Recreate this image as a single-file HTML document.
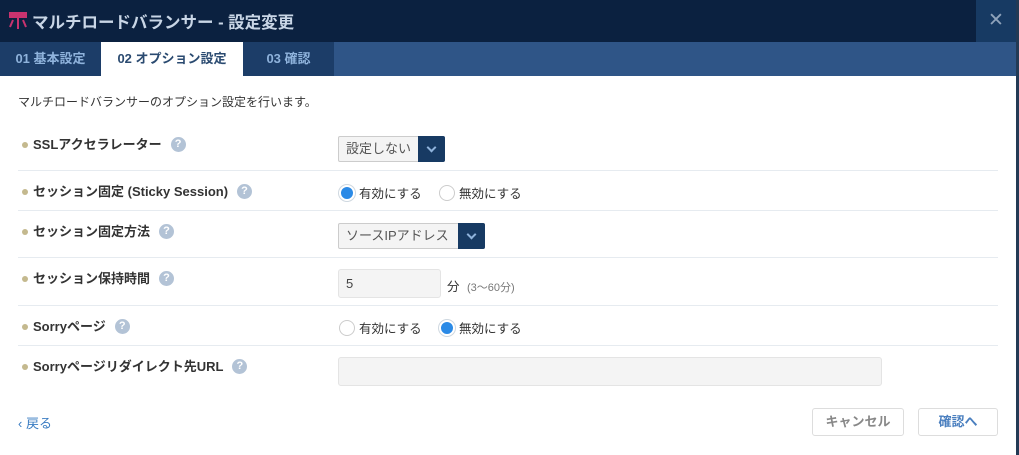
<!DOCTYPE html><html><head><meta charset="utf-8"><style>
*{box-sizing:border-box;margin:0;padding:0}
body{width:1019px;height:455px;overflow:hidden;background:#fff;font-family:"Liberation Sans","Noto Sans CJK JP",sans-serif;position:relative;color:#333}
.hd{position:absolute;left:0;top:0;width:1019px;height:42px;background:#0b2140}
.hd .t{position:absolute;left:32px;top:9px;font-size:16.5px;font-weight:bold;color:#c9d6e6}
.cl{position:absolute;left:976px;top:0;width:40px;height:42px;background:#173a63;color:#8fa3bb;font-size:19px;text-align:center;line-height:42px}
.tabs{position:absolute;left:0;top:42px;width:1016px;height:34px;background:#2f5587}
.tab{position:absolute;top:0;height:34px;line-height:34px;font-size:13px;font-weight:bold;color:#8fb3dc;text-align:center;background:#1c3d68}
.edge{position:absolute;left:1016px;top:0;width:3px;height:455px;background:#233a55}
.desc{position:absolute;left:18px;top:93px;font-size:12px;color:#333}
.lb{position:absolute;left:22px;font-size:13px;font-weight:bold;color:#333;line-height:18px;white-space:nowrap}
.lb:before{content:"";display:inline-block;width:6px;height:6px;border-radius:50%;background:#c4b98e;margin-right:5px;vertical-align:top;margin-top:6px}
.q{display:inline-block;width:15px;height:15px;border-radius:50%;background:#b3c3d6;color:#fff;font-size:11px;text-align:center;line-height:15px;margin-left:9px;vertical-align:top;margin-top:1px}
.sep{position:absolute;left:18px;width:980px;height:1px;background:#e6ebf0}
.sel{position:absolute;left:338px;height:26px;border:1px solid #ccc;border-radius:2px;background:#f4f4f4;font-size:13px;color:#555;line-height:24px;padding-left:7px}
.sel .a{position:absolute;right:-1px;top:-1px;width:27px;height:26px;background:#173a63;border-radius:0 2px 2px 0}
.sel .a:after{content:"";position:absolute;left:10px;top:8px;width:5px;height:5px;border-right:2px solid #8fb3dc;border-bottom:2px solid #8fb3dc;transform:rotate(45deg)}
.rad{position:absolute;font-size:12.5px;color:#333}
.rad i{display:inline-block;width:16px;height:16px;border-radius:50%;border:1px solid #ccc;vertical-align:-3px;margin-right:4px;background:#fff}
.rad i.on{background:#2b8ae6;border:2px solid #fff;box-shadow:0 0 0 1px #cfd8e0}
.inp{position:absolute;background:#f4f4f4;border:1px solid #e4e4e4;border-radius:3px}
.btn{position:absolute;top:408px;height:28px;border:1px solid #ddd;border-radius:3px;font-size:13px;font-weight:bold;text-align:center;line-height:26px}
</style></head><body>
<div class="hd"><svg style="position:absolute;left:9px;top:12px" width="18" height="18" viewBox="0 0 18 18"><rect x="0" y="0" width="18" height="6" fill="#c8336f"/><rect x="8" y="6" width="2" height="11" fill="#c8336f"/><path d="M4 8 L1 15 M14 8 L17 15" stroke="#c8336f" stroke-width="2"/></svg><div class="t">マルチロードバランサー - 設定変更</div></div>
<div class="cl">✕</div>
<div class="tabs"><div class="tab" style="left:0;width:101px">01 基本設定</div><div class="tab" style="left:101px;width:142px;background:#fff;color:#2a4a70">02 オプション設定</div><div class="tab" style="left:243px;width:91px">03 確認</div></div>
<div class="edge"></div>
<div class="desc">マルチロードバランサーのオプション設定を行います。</div>
<div class="lb" style="top:136px">SSLアクセラレーター<span class="q">?</span></div>
<div class="sel" style="top:136px;width:107px">設定しない<span class="a"></span></div>
<div class="sep" style="top:170px"></div>
<div class="lb" style="top:183px">セッション固定 (Sticky Session)<span class="q">?</span></div>
<div class="rad" style="left:339px;top:183px"><i class="on"></i>有効にする</div>
<div class="rad" style="left:439px;top:183px"><i></i>無効にする</div>
<div class="sep" style="top:210px"></div>
<div class="lb" style="top:223px">セッション固定方法<span class="q">?</span></div>
<div class="sel" style="top:223px;width:147px">ソースIPアドレス<span class="a"></span></div>
<div class="sep" style="top:257px"></div>
<div class="lb" style="top:270px">セッション保持時間<span class="q">?</span></div>
<div class="inp" style="left:338px;top:269px;width:103px;height:29px;font-size:13px;line-height:27px;padding-left:7px;color:#444">5</div>
<div style="position:absolute;left:447px;top:276px;font-size:12.5px">分 <span style="font-size:11px;color:#777;margin-left:4px">(3〜60分)</span></div>
<div class="sep" style="top:305px"></div>
<div class="lb" style="top:318px">Sorryページ<span class="q">?</span></div>
<div class="rad" style="left:339px;top:318px"><i></i>有効にする</div>
<div class="rad" style="left:439px;top:318px"><i class="on"></i>無効にする</div>
<div class="sep" style="top:345px"></div>
<div class="lb" style="top:358px">Sorryページリダイレクト先URL<span class="q">?</span></div>
<div class="inp" style="left:338px;top:357px;width:544px;height:29px"></div>
<div style="position:absolute;left:18px;top:413px;font-size:13px;color:#3a7cc2">‹ 戻る</div>
<div class="btn" style="left:812px;width:92px;color:#888">キャンセル</div>
<div class="btn" style="left:918px;width:80px;color:#4a7fbf">確認へ</div>
</body></html>
